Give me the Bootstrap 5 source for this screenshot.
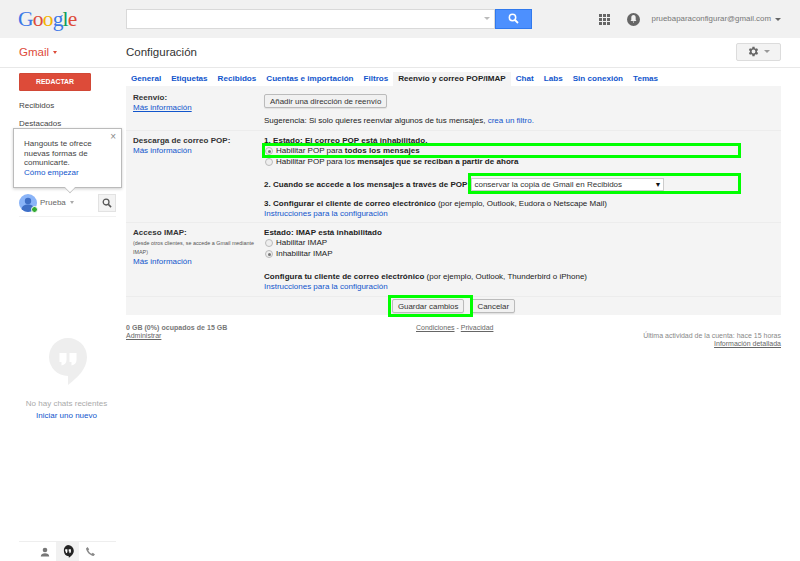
<!DOCTYPE html>
<html lang="es"><head><meta charset="utf-8"><title>Configuración</title>
<link href="https://cdn.jsdelivr.net/npm/bootstrap@5.3.0/dist/css/bootstrap.min.css" rel="stylesheet">
<style>
html,body{height:561px;overflow:hidden}
body{font-family:"Liberation Sans",Arial,sans-serif;font-size:8px;line-height:10px;color:#222;background:#fff;position:relative}
a{color:#15c;text-decoration:none}
b{letter-spacing:.04px}
.topbar{height:38px;background:#f1f1f1;padding:0 19px 0 18px}
.logo{width:108px;font:21.5px/30px "Liberation Serif",serif;letter-spacing:-.8px;margin-top:-1px}
.searchbox{width:406px;height:20px;margin-top:-1px}
.searchfield{background:#fff;border:1px solid #d9d9d9;position:relative;padding-right:4px}
.caret-s{width:0;height:0;border:3px solid transparent;border-top:3px solid #bbb;border-bottom:0}
.searchbtn{width:37px;background:#4d90fe;border:1px solid #3079ed}
.apps{display:grid;grid-template-columns:repeat(3,3px);gap:1px;margin-left:auto}
.apps i{display:block;width:3px;height:3px;background:#666}
.bell{width:13px;height:13px;border-radius:50%;background:#666;margin-left:17px}
.acct{color:#777;font-size:7.9px;margin-left:12px}
.subbar{height:30px;border-bottom:1px solid #e8e8e8;padding:0 19px 2px 0}
.gmail{width:126px;padding-left:19px;color:#dd4b39;font-size:11.5px}
.gmail-caret{display:inline-block;border:2.5px solid transparent;border-top:3px solid #dd4b39;border-bottom:0;vertical-align:2px;margin-left:4px}
.ptitle{font-size:11.5px;color:#333}
.gearbtn{width:45px;height:18px;margin-left:auto;background:#f3f3f3;border:1px solid #dcdcdc;border-radius:2px}
.shell{height:493px}
.side{width:126px;height:493px;position:relative}
.compose{margin:5px 0 0 19px;width:72px;height:18px;background:#dd4b39;border:1px solid #d14836;color:#fff;font-weight:700;font-size:6.9px;border-radius:1px}
.navlink{margin:9px 0 0 19px;height:11px;color:#444;font-size:8px;line-height:11px}
.navlink+.navlink{margin-top:7px}
.tip{position:absolute;left:13px;top:60px;width:109px;height:60px;background:#fff;border:1px solid #bbb;box-shadow:0 1px 3px rgba(0,0,0,.2);padding:10px 10px;color:#444;line-height:9.5px;font-size:8px;z-index:2}
.tip::after{content:"";position:absolute;left:51px;bottom:-6px;width:10px;height:10px;background:#fff;border-right:1px solid #bbb;border-bottom:1px solid #bbb;transform:rotate(45deg) scale(.75)}
.tipx{position:absolute;right:5px;top:3px;color:#888;font-size:10px;line-height:10px}
.me{margin:65px 10px 0 19px;padding-bottom:5px;border-bottom:1px solid #f2f2f2;height:23px}
.avatar{width:18px;height:18px;border-radius:50%;background:#8ab4f8;position:relative;overflow:hidden}
.avatarwrap{position:relative;width:18px;height:18px}
.online{position:absolute;right:-1px;bottom:-1px;width:7px;height:7px;background:#3a3;border-radius:50%;border:1px solid #fff}
.mename{color:#666;font-size:8px;margin-left:3px}
.mecaret{border:2px solid transparent;border-top:3px solid #aaa;border-bottom:0;margin-left:4px}
.mesearch{width:18px;height:18px;margin-left:auto;background:#f3f3f3;border:1px solid #e2e2e2}
.empty{margin-top:121px;text-align:center;width:126px;padding-left:7px;font-size:8px}
.empty p{color:#aaa;margin:13px 0 1px;line-height:12px}
.bottomtabs{position:absolute;left:19px;right:10px;bottom:0;height:20px;border-top:1px solid #eee}
.btab{width:23px;height:19px}
.btab.cur{background:#f1f1f1}
.content{width:655px}
.tabs{height:14px;padding-left:5px;margin-top:4px;font-weight:700;font-size:8.1px;line-height:14px}
.tabs a{margin-right:10px;white-space:nowrap}
.tabs .cur{background:#f4f4f4;color:#222;padding:0 5px;margin:0 5px 0 -5px}
.panel{background:#f4f4f4;height:229px}
.setrow{display:flex;border-bottom:1px solid #ececec;padding-left:7px}
.lab{width:131px;flex:none}
.lab b{font-weight:700;color:#333}
.lab .tiny{font-size:5.4px;line-height:9px;color:#555;display:block;margin-top:.5px}
.val{flex:1;min-width:0}
.btn-g{font-size:7.9px;line-height:10px;color:#333;background:#f1f1f1;border:1px solid #bbb;padding:2px 5px 0;height:14px;border-radius:2px;box-shadow:0 1px 1px rgba(0,0,0,.08)}
.rad{appearance:none;width:8px;height:8px;border:1px solid #bbb;border-radius:50%;background:#eee;margin:0 3px 0 1px;flex:none;position:relative}
.rad:checked::after{content:"";position:absolute;inset:1.5px;background:#777;border-radius:50%}
.nowr{white-space:nowrap}
.sel{display:inline-flex;width:193px;height:13px;background:#fff;border:1px solid #ccc;padding:0 2px;align-items:center;justify-content:space-between;margin-left:4px;color:#333;font-size:8px}
.foot{font-size:7px;color:#666;line-height:8px;margin-top:9px}
.foot a{color:#666;text-decoration:underline}
.mark-g{position:absolute;border:3px solid #0f0;z-index:3;pointer-events:none}
.savebar{gap:7px;padding-top:2px}
</style></head><body>
<header class="topbar d-flex align-items-center">
 <div class="logo"><span style="color:#3b78e7">G</span><span style="color:#dd4b39">o</span><span style="color:#f4b400">o</span><span style="color:#3b78e7">g</span><span style="color:#0f9d58">l</span><span style="color:#dd4b39">e</span></div>
 <div class="searchbox d-flex">
  <div class="searchfield flex-grow-1 d-flex align-items-center justify-content-end"><span class="caret-s"></span></div>
  <div class="searchbtn d-flex align-items-center justify-content-center"><svg width="11" height="11" viewBox="0 0 11 11"><circle cx="4.5" cy="4.5" r="3.2" fill="none" stroke="#fff" stroke-width="1.5"/><path d="M7 7l3 3" stroke="#fff" stroke-width="1.8"/></svg></div>
 </div>
 <div class="apps"><i></i><i></i><i></i><i></i><i></i><i></i><i></i><i></i><i></i></div>
 <div class="bell d-flex align-items-center justify-content-center"><svg width="7" height="8" viewBox="0 0 7 8"><path d="M3.5 0C2 0 1.3 1.2 1.3 2.6V5L.5 6h6l-.8-1V2.6C5.700 1.200 5 0 3.500 0zM2.700 6.600h1.600L3.500 8z" fill="#f1f1f1"/></svg></div>
 <div class="acct">pruebaparaconfigurar@gmail.com</div>
 <span class="caret-s ms-1" style="border-top-color:#666"></span>
</header>
<div class="subbar d-flex align-items-center">
 <div class="gmail">Gmail<span class="gmail-caret"></span></div>
 <div class="ptitle">Configuración</div>
 <div class="gearbtn d-flex align-items-center justify-content-center">
  <svg width="13" height="13" viewBox="0 0 24 24"><path fill="#666" d="M19.400 13a7.500 7.500 0 0 0 0-2l2.100-1.600-2-3.500-2.500 1a7.500 7.500 0 0 0-1.700-1L15 3.300h-4l-.4 2.600a7.500 7.500 0 0 0-1.700 1l-2.500-1-2 3.500L6.500 11a7.500 7.500 0 0 0 0 2l-2.100 1.600 2 3.500 2.500-1a7.500 7.500 0 0 0 1.700 1l.4 2.600h4l.4-2.600a7.500 7.500 0 0 0 1.700-1l2.500 1 2-3.500zM13 15.500a3.500 3.500 0 1 1 0-7 3.500 3.500 0 0 1 0 7z" transform="translate(-1)"/></svg>
  <span class="caret-s ms-1" style="border-top-color:#999"></span>
 </div>
</div>
<div class="shell d-flex">
 <aside class="side">
  <div class="compose d-flex align-items-center justify-content-center">REDACTAR</div>
  <div class="navlink">Recibidos</div>
  <div class="navlink">Destacados</div>
  <div class="tip"><span class="tipx">×</span>Hangouts te ofrece<br>nuevas formas de<br>comunicarte.<br><a href="#">Cómo empezar</a></div>
  <div class="me d-flex align-items-start">
   <div class="avatarwrap"><div class="avatar"><svg width="18" height="18" viewBox="0 0 18 18"><circle cx="9" cy="7" r="3.200" fill="#3f6fc6"/><path d="M2.500 16c0-4 3-5.500 6.500-5.500s6.500 1.500 6.500 5.500v2h-13z" fill="#3f6fc6"/></svg></div><span class="online"></span></div>
   <span class="mename align-self-center">Prueba</span><span class="mecaret align-self-center"></span>
   <div class="mesearch d-flex align-items-center justify-content-center"><svg width="10" height="10" viewBox="0 0 11 11"><circle cx="4.500" cy="4.500" r="3.200" fill="none" stroke="#555" stroke-width="1.400"/><path d="M7 7l3 3" stroke="#555" stroke-width="1.700"/></svg></div>
  </div>
  <div class="empty">
   <svg width="38" height="47" viewBox="0 0 38 47" style="display:block;margin:0 auto 0 42px"><path d="M19 0a19 19 0 0 1 19 19C38 31 28 40 19 47v-9A19 19 0 0 1 19 0z" fill="#eee"/><path d="M10.500 15h7v7c0 3-2 5-5 5.500V24h-2zM20.500 15h7v7c0 3-2 5-5 5.500V24h-2z" fill="#fff"/></svg>
   <p>No hay chats recientes</p><a href="#">Iniciar uno nuevo</a>
  </div>
  <div class="bottomtabs d-flex justify-content-center">
   <div class="btab d-flex align-items-center justify-content-center"><svg width="10" height="10" viewBox="0 0 10 10"><circle cx="5" cy="3" r="2.300" fill="#777"/><path d="M.8 9.500c0-2.500 2-3.300 4.200-3.300s4.200.8 4.200 3.300z" fill="#777"/></svg></div>
   <div class="btab cur d-flex align-items-center justify-content-center"><svg width="12" height="13" viewBox="0 0 12 13"><path d="M6 0a5.800 5.800 0 0 1 5.800 5.800c0 3.200-2.800 5.500-5 7v-1.500A5.800 5.800 0 0 1 6 0z" fill="#222"/><path d="M3.200 4.200h2.200v2.200c0 1-.6 1.600-1.500 1.800V6.600h-.7zM6.700 4.200h2.200v2.200c0 1-.6 1.600-1.500 1.800V6.600h-.7z" fill="#fff"/></svg></div>
   <div class="btab d-flex align-items-center justify-content-center"><svg width="11" height="11" viewBox="0 0 11 11"><path d="M2.500 1 1 2.500C1.500 6 5 9.500 8.500 10L10 8.500 7.800 6.800 6.600 7.700C5.300 7 4 5.700 3.300 4.400L4.200 3.200z" fill="#888"/></svg></div>
  </div>
 </aside>
 <main class="content">
  <nav class="tabs d-flex">
   <a href="#">General</a><a href="#">Etiquetas</a><a href="#">Recibidos</a><a href="#">Cuentas e importación</a><a href="#">Filtros</a><a href="#" class="cur">Reenvío y correo POP/IMAP</a><a href="#">Chat</a><a href="#">Labs</a><a href="#">Sin conexión</a><a href="#">Temas</a>
  </nav>
  <div class="panel">
   <div class="setrow" style="height:45px;padding-top:7px">
    <div class="lab pt-px-row"><b>Reenvío:</b><br><a href="#" class="text-decoration-underline">Más información</a></div>
    <div class="val"><button class="btn-g d-block" style="margin-top:1px" type="button">Añadir una dirección de reenvío</button><div style="margin-top:8px">Sugerencia: Si solo quieres reenviar algunos de tus mensajes, <a href="#">crea un filtro.</a></div></div>
   </div>
   <div class="setrow" style="height:92px;padding-top:5px">
    <div class="lab"><b>Descarga de correo POP:</b><br><a href="#">Más información</a></div>
    <div class="val">
     <div><b>1. Estado: El correo POP está inhabilitado.</b></div>
     <div class="d-flex align-items-center nowr"><input class="rad" type="radio" name="p" checked aria-label="todos"><span>Habilitar POP para <b>todos los mensajes</b></span></div>
     <div class="d-flex align-items-center nowr" style="margin-top:1px"><input class="rad" type="radio" name="p" aria-label="ahora"><span>Habilitar POP para los <b>mensajes que se reciban a partir de ahora</b></span></div>
     <div class="d-flex align-items-center nowr" style="margin-top:11px;height:13px"><b>2. Cuando se accede a los mensajes a través de POP</b><span class="sel"><span>conservar la copia de Gmail en Recibidos</span><span style="font-size:7px;color:#111">▼</span></span></div>
     <div style="margin-top:8px"><b>3. Configurar el cliente de correo electrónico</b> (por ejemplo, Outlook, Eudora o Netscape Mail)</div>
     <a href="#">Instrucciones para la configuración</a>
    </div>
   </div>
   <div class="setrow" style="height:74px;padding-top:5px">
    <div class="lab"><b>Acceso IMAP:</b><span class="tiny">(desde otros clientes, se accede a Gmail mediante IMAP)</span><a href="#">Más información</a></div>
    <div class="val">
     <div><b>Estado: IMAP está inhabilitado</b></div>
     <div class="d-flex align-items-center"><input class="rad" type="radio" name="i" aria-label="h"><span>Habilitar IMAP</span></div>
     <div class="d-flex align-items-center" style="margin-top:1px"><input class="rad" type="radio" name="i" checked aria-label="i"><span>Inhabilitar IMAP</span></div>
     <div style="margin-top:13px"><b>Configura tu cliente de correo electrónico</b> (por ejemplo, Outlook, Thunderbird o iPhone)</div>
     <a href="#">Instrucciones para la configuración</a>
    </div>
   </div>
   <div class="d-flex justify-content-center savebar">
    <button class="btn-g" type="button">Guardar cambios</button><button class="btn-g" type="button">Cancelar</button>
   </div>
  </div>
  <footer class="foot d-flex">
   <div style="width:242px"><b style="font-weight:700;color:#777">0 GB (0%) ocupados de 15 GB</b><br><a href="#">Administrar</a></div>
   <div style="width:180px;padding-left:48px"><a href="#">Condiciones</a> - <a href="#">Privacidad</a></div>
   <div class="ms-auto text-end" style="padding-top:8px;line-height:7.500px;color:#888">Última actividad de la cuenta: hace 15 horas<br><a href="#">Información detallada</a></div>
  </footer>
 </main>
</div>
<div class="mark-g" style="left:262px;top:143px;width:479px;height:15px"></div>
<div class="mark-g" style="left:468px;top:173px;width:273px;height:21px"></div>
<div class="mark-g" style="left:388px;top:295px;width:85px;height:22px"></div>
<script src="https://cdn.jsdelivr.net/npm/bootstrap@5.3.0/dist/js/bootstrap.bundle.min.js"></script>
</body></html>
